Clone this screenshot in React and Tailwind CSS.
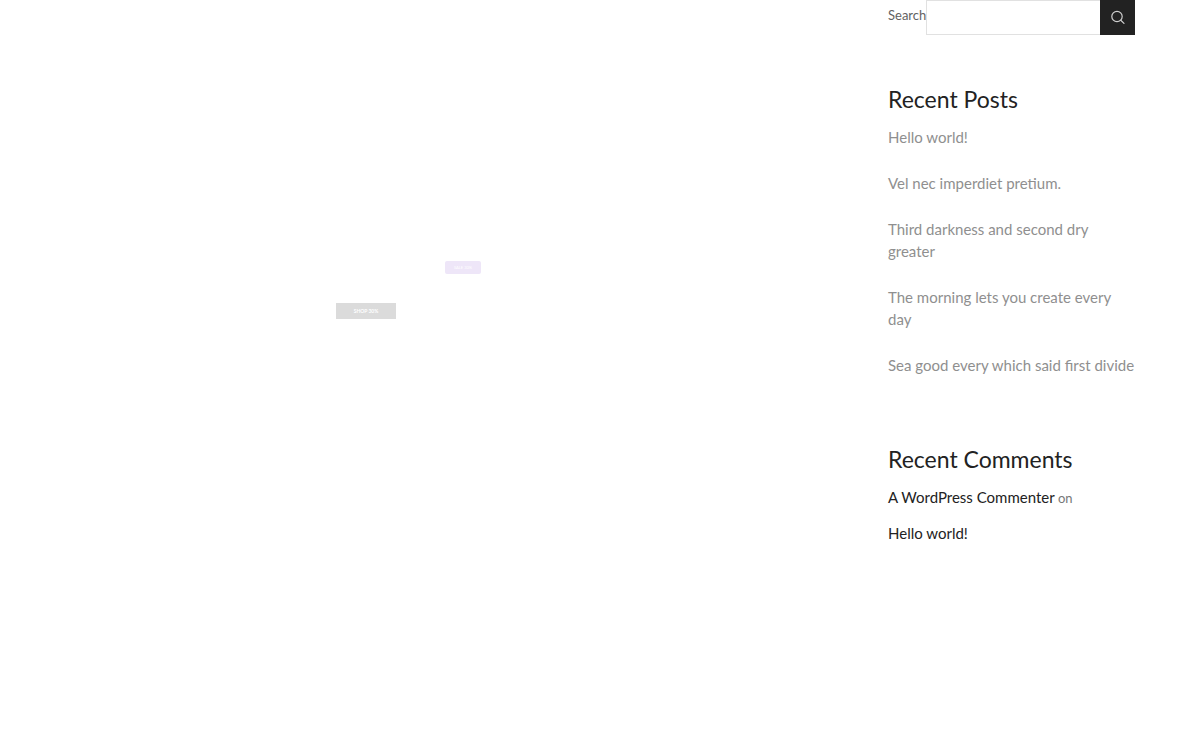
const posts = [
  "Hello world!",
  "Vel nec imperdiet pretium.",
  "Third darkness and second dry greater",
  "The morning lets you create every day",
  "Sea good every which said first divide",
];

function Promo() {
  return (
    <section className="flex flex-1 flex-col pt-[261px]" aria-label="Promotions">
      <button className="ml-[445px] h-[13px] w-9 rounded-xs bg-[#eee6f8] text-center text-[4px] leading-[13px] text-white">
        SALE 30%
      </button>
      <button className="mt-[29px] ml-[336px] h-4 w-[60px] bg-[#dbdbdb] text-center text-[5px] leading-4 font-bold text-white">
        SHOP 30%
      </button>
    </section>
  );
}

function SearchIcon() {
  return (
    <svg width="16" height="16" viewBox="0 0 16 16" fill="none" stroke="currentColor" strokeWidth="1.2" strokeLinecap="round" aria-hidden="true">
      <circle cx="7" cy="6.5" r="5.2" />
      <path d="M10.8 10.3 14 13.4" />
    </svg>
  );
}

function SearchForm() {
  return (
    <form className="flex items-start" onSubmit={(e) => e.preventDefault()}>
      <label htmlFor="search" className="pt-[5px] text-[13px] leading-5 text-[#626262]">
        Search
      </label>
      <input
        id="search"
        type="search"
        className="h-[35px] min-w-0 flex-1 border border-r-0 border-[#e1e1e1] bg-white px-3 text-[13px] outline-none"
      />
      <button aria-label="Search" className="flex h-[35px] w-[35px] items-center justify-center bg-[#222222] text-[#cfcfcf]">
        <SearchIcon />
      </button>
    </form>
  );
}

export default function App() {
  return (
    <main className="flex min-h-screen bg-white pr-[65px] font-['Lato',sans-serif]">
      <Promo />
      <aside className="w-[247px] shrink-0">
        <SearchForm />
        <section className="mt-[49px]">
          <h2 className="text-[23px] leading-[30px] text-[#222222]">Recent Posts</h2>
          <ul className="mt-3 flex flex-col gap-6 text-[15px] leading-[22px] text-[#8f8f8f]">
            {posts.map((post) => (
              <li key={post}>
                <a href="#post">{post}</a>
              </li>
            ))}
          </ul>
        </section>
        <section className="mt-[68px]">
          <h2 className="text-[23px] leading-[30px] text-[#222222]">Recent Comments</h2>
          <p className="mt-1.5 text-[13px] leading-[35px] text-[#777777]">
            <a href="#author" className="text-[15px] text-[#222222]">A WordPress Commenter</a> on
            <a href="#post" className="block text-[15px] leading-[35px] text-[#222222]">Hello world!</a>
          </p>
        </section>
      </aside>
    </main>
  );
}
